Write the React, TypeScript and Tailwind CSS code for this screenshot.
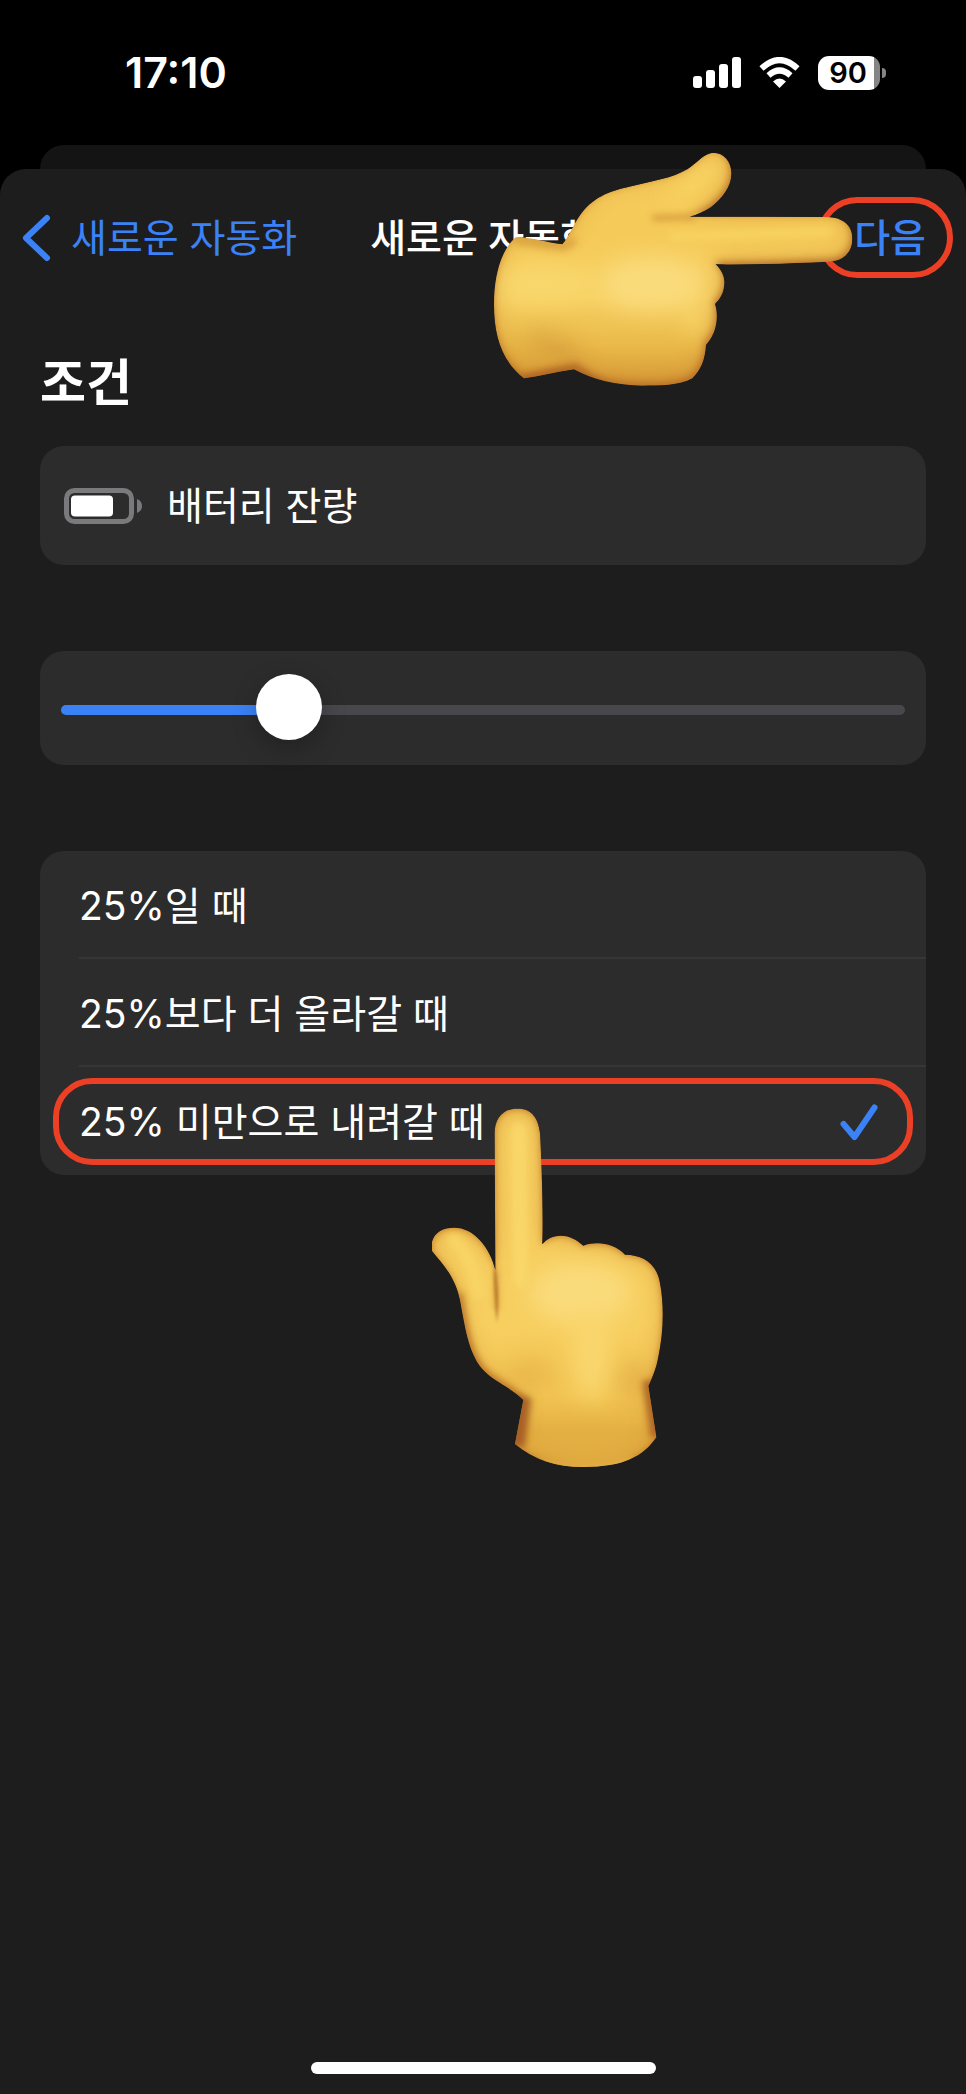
import { useState } from "react"

const options = [
  { value: "equal", label: "25%일 때" },
  { value: "above", label: "25%보다 더 올라갈 때" },
  { value: "below", label: "25% 미만으로 내려갈 때" },
]

const HAND_RIGHT =
  "M150 322C195 320 240 338 290 343C310 320 325 275 355 240C400 190 450 180 500 168C560 153 620 145 665 118C695 98 715 70 742 68C775 68 797 95 797 130C797 170 770 205 735 232C715 245 695 254 672 260L1085 261C1130 262 1160 285 1160 325C1160 370 1130 395 1085 395C980 400 860 404 750 403C768 420 777 440 776 460C775 490 762 508 748 522C756 545 755 580 745 605C737 625 728 635 721 645C718 690 705 720 680 745C640 767 580 767 530 767C450 765 385 750 325 718C275 725 225 738 175 745C110 695 85 620 85 525C85 440 105 360 150 322Z"

const HAND_UP =
  "M345 1092L370 960C330 920 280 905 245 865C205 815 195 740 180 660C165 590 130 555 96 513L96 485C105 455 130 443 163 443C220 443 270 500 286 570L284 160C284 115 310 86 350 86C395 84 415 115 420 160C425 250 430 400 427 492C440 478 455 467 483 467C510 467 530 480 550 497C590 483 640 488 675 524C730 525 770 550 780 610C793 680 790 760 775 830C768 870 755 895 745 918L769 1072C730 1130 670 1161 550 1161C470 1161 400 1140 345 1092Z"

// everything outside the hand, used to cast shade inwards from its edge
const OUTSIDE = "M-400-400H1900V1900H-400Z"

function HandRight({ className }: { className?: string }) {
  return (
    <svg viewBox="79 60 1086 711" className={className} aria-hidden="true">
      <defs>
        <clipPath id="hr-clip">
          <path d={HAND_RIGHT} />
        </clipPath>
        <linearGradient id="hr-base" gradientUnits="userSpaceOnUse" x1="0" y1="60" x2="0" y2="770">
          <stop offset="0" stopColor="#f6cc5c" />
          <stop offset="0.35" stopColor="#f5ca59" />
          <stop offset="0.62" stopColor="#f7d062" />
          <stop offset="0.82" stopColor="#eaba4a" />
          <stop offset="1" stopColor="#d79a38" />
        </linearGradient>
        <filter id="hr-s" filterUnits="userSpaceOnUse" x="-400" y="-400" width="2300" height="2300">
          <feGaussianBlur stdDeviation="11" />
        </filter>
        <filter id="hr-l" filterUnits="userSpaceOnUse" x="-400" y="-400" width="2300" height="2300">
          <feGaussianBlur stdDeviation="34" />
        </filter>
      </defs>
      <g clipPath="url(#hr-clip)">
        <path d={HAND_RIGHT} fill="url(#hr-base)" />
        <ellipse cx="560" cy="460" rx="160" ry="80" fill="#fadb7c" filter="url(#hr-l)" />
        <ellipse cx="230" cy="460" rx="170" ry="50" fill="#f9d86d" filter="url(#hr-l)" />
        <path d="M640 190L745 115" stroke="#fad968" strokeWidth="40" strokeLinecap="round" filter="url(#hr-l)" />
        <path d="M690 555L700 590" stroke="#fada70" strokeWidth="50" strokeLinecap="round" filter="url(#hr-l)" />
        <path d={OUTSIDE + HAND_RIGHT} fillRule="evenodd" fill="#a85f20" opacity="0.8" transform="translate(-3 -8)" filter="url(#hr-s)" />
        <path d={OUTSIDE + HAND_RIGHT} fillRule="evenodd" fill="#c27a26" opacity="0.4" transform="translate(-2 -14)" filter="url(#hr-l)" />
        <path d="M620 320L1090 304" stroke="#fad968" strokeWidth="26" strokeLinecap="round" opacity="0.6" filter="url(#hr-s)" />
        <path d="M560 264L690 261" stroke="#c17a28" strokeWidth="12" opacity="0.8" filter="url(#hr-s)" />
        <path d="M150 332L295 352L330 330" fill="none" stroke="#cf9136" strokeWidth="20" opacity="0.7" filter="url(#hr-s)" />
        <path d="M160 750L330 712L400 770" fill="none" stroke="#a85a20" strokeWidth="26" opacity="0.6" filter="url(#hr-s)" />
        <path d="M180 640Q260 620 330 690" fill="none" stroke="#c68631" strokeWidth="50" opacity="0.5" filter="url(#hr-l)" />
      </g>
    </svg>
  )
}

function HandUp({ className }: { className?: string }) {
  return (
    <svg viewBox="90 81 705 1086" className={className} aria-hidden="true">
      <defs>
        <clipPath id="hu-clip">
          <path d={HAND_UP} />
        </clipPath>
        <linearGradient id="hu-base" gradientUnits="userSpaceOnUse" x1="0" y1="80" x2="0" y2="1165">
          <stop offset="0" stopColor="#f7cf60" />
          <stop offset="0.6" stopColor="#f7cf60" />
          <stop offset="0.8" stopColor="#f2c553" />
          <stop offset="0.9" stopColor="#e3ae42" />
          <stop offset="1" stopColor="#e3b044" />
        </linearGradient>
        <filter id="hu-xs" filterUnits="userSpaceOnUse" x="-400" y="-400" width="2300" height="2300">
          <feGaussianBlur stdDeviation="4" />
        </filter>
        <filter id="hu-s" filterUnits="userSpaceOnUse" x="-400" y="-400" width="2300" height="2300">
          <feGaussianBlur stdDeviation="10" />
        </filter>
        <filter id="hu-l" filterUnits="userSpaceOnUse" x="-400" y="-400" width="2300" height="2300">
          <feGaussianBlur stdDeviation="34" />
        </filter>
      </defs>
      <g clipPath="url(#hu-clip)">
        <path d={HAND_UP} fill="url(#hu-base)" />
        <ellipse cx="540" cy="640" rx="150" ry="90" fill="#fadb7c" filter="url(#hu-l)" />
        <ellipse cx="575" cy="820" rx="55" ry="140" fill="#f9d76e" filter="url(#hu-l)" />
        <ellipse cx="390" cy="880" rx="70" ry="50" fill="#dda23c" opacity="0.4" filter="url(#hu-l)" />
        <ellipse cx="700" cy="900" rx="40" ry="60" fill="#d2933a" opacity="0.4" filter="url(#hu-l)" />
        <path d={OUTSIDE + HAND_UP} fillRule="evenodd" fill="#b4681f" opacity="0.75" transform="translate(0 2)" filter="url(#hu-s)" />
        <path d={OUTSIDE + HAND_UP} fillRule="evenodd" fill="#c27a26" opacity="0.4" filter="url(#hu-l)" />
        <path d="M356 150L362 600" stroke="#f9d86c" strokeWidth="44" strokeLinecap="round" opacity="0.85" filter="url(#hu-s)" />
        <path d="M160 480Q215 525 235 640" fill="none" stroke="#f8d566" strokeWidth="40" strokeLinecap="round" opacity="0.85" filter="url(#hu-s)" />
        <path d="M282 540Q300 620 291 730Q281 640 282 540Z" fill="#b06a24" filter="url(#hu-xs)" />
        <path d="M289 570L291 690" stroke="#c98a33" strokeWidth="14" opacity="0.6" filter="url(#hu-s)" />
        <path d="M180 640C195 740 205 815 245 865C280 905 330 920 370 960" fill="none" stroke="#ad6424" strokeWidth="20" opacity="0.6" filter="url(#hu-s)" />
        <path d="M372 950L352 1100" stroke="#9c5320" strokeWidth="46" opacity="0.8" filter="url(#hu-s)" />
        <path d="M742 900L768 1070" stroke="#a55c22" strokeWidth="34" opacity="0.75" filter="url(#hu-s)" />
        <path d="M410 1160Q550 1186 700 1150" fill="none" stroke="#e3b044" strokeWidth="44" filter="url(#hu-s)" />
      </g>
    </svg>
  )
}

function StatusBar() {
  return (
    <div className="flex h-[145px] items-center justify-between pr-20 pl-[125px]">
      <span className="pb-[2px] text-[43px] leading-[48px] font-semibold text-white">17:10</span>
      <div className="flex items-center gap-[18px]">
        <svg width="48" height="31" viewBox="0 0 48 31" fill="#fff" aria-hidden="true">
          <rect x="0" y="19" width="9" height="12" rx="3" />
          <rect x="13" y="13" width="9" height="18" rx="3" />
          <rect x="26" y="7" width="9" height="24" rx="3" />
          <rect x="39" y="0" width="9" height="31" rx="3" />
        </svg>
        <svg width="41" height="31" viewBox="0 0 41 31" fill="none" stroke="#fff" strokeWidth="6" aria-hidden="true">
          <path d="M2.5 11.5Q20.5-5.5 38.5 11.5" />
          <path d="M9.5 18.5Q20.5 8.5 31.5 18.5" />
          <path d="M20.5 31L14 24.5Q20.5 18.5 27 24.5Z" fill="#fff" stroke="none" />
        </svg>
        <div className="flex items-center gap-[2px]">
          <div className="flex h-[34px] w-[62px] items-center justify-center rounded-[11px] bg-linear-to-r from-white from-90% to-[#858585] to-90% pr-[2px] text-[29px] leading-[34px] font-semibold text-black">
            90
          </div>
          <div className="h-[10px] w-1 rounded-r-full bg-[#858585]" />
        </div>
      </div>
    </div>
  )
}

function BatteryIcon() {
  return (
    <svg width="79" height="36" viewBox="0 0 79 36" aria-hidden="true">
      <rect x="2.5" y="2.5" width="65" height="31" rx="8" fill="none" stroke="#7a7a7c" strokeWidth="5" />
      <rect x="7" y="7.5" width="42" height="21" rx="4" fill="#fff" />
      <path d="M73 11Q78 13 78 18T73 25Z" fill="#7a7a7c" />
    </svg>
  )
}

export default function App() {
  const [level, setLevel] = useState(25)
  const [selected, setSelected] = useState("below")

  return (
    <div
      lang="ko"
      className="flex min-h-screen flex-col bg-black font-[Inter,'Noto_Sans_CJK_KR',sans-serif] text-[39px] leading-[48px] text-white"
    >
      <StatusBar />
      <div className="mx-10 h-6 rounded-t-[24px] bg-[#141414]" />

      <main className="flex flex-1 flex-col rounded-t-[26px] bg-[#1d1d1d]">
        <header className="relative grid h-[138px] grid-cols-[1fr_auto_1fr] items-center px-[22px]">
          <button type="button" className="flex items-center gap-5 justify-self-start text-[#3b82f7]">
            <svg width="29" height="48" viewBox="0 0 29 48" fill="none" stroke="currentColor" strokeWidth="6" strokeLinecap="round" strokeLinejoin="round" aria-hidden="true">
              <path d="M25 4L4 24L25 44" />
            </svg>
            새로운 자동화
          </button>
          <h1 className="font-medium">새로운 자동화</h1>
          <button type="button" className="relative mr-[18px] justify-self-end font-medium text-[#3b82f7]">
            다음
            <span className="absolute -top-[17px] -right-[27px] h-[81px] w-[136px] rounded-full border-6 border-[#eb4025]" />
          </button>
          <HandRight className="pointer-events-none absolute -top-[19px] right-[112px] h-[237px] w-[362px]" />
        </header>

        <div className="flex flex-1 flex-col px-10 pt-[46px]">
          <h2 className="text-[50px] leading-[60px] font-bold">조건</h2>

          <section className="mt-[33px] flex h-[119px] items-center gap-6 rounded-[24px] bg-[#2c2c2c] px-6">
            <BatteryIcon />
            <span>배터리 잔량</span>
          </section>

          <section className="mt-[86px] flex h-[114px] items-center rounded-[24px] bg-[#2c2c2c] px-[21px] pt-1">
            <input
              type="range"
              min={0}
              max={100}
              value={level}
              onChange={(e) => setLevel(Number(e.target.value))}
              aria-label="배터리 잔량"
              className="h-[66px] w-full appearance-none bg-transparent [&::-webkit-slider-runnable-track]:h-[10px] [&::-webkit-slider-runnable-track]:rounded-full [&::-webkit-slider-runnable-track]:bg-[linear-gradient(to_right,#3b82f7_var(--level),#48474b_var(--level))] [&::-webkit-slider-thumb]:-mt-[31px] [&::-webkit-slider-thumb]:size-[66px] [&::-webkit-slider-thumb]:appearance-none [&::-webkit-slider-thumb]:rounded-full [&::-webkit-slider-thumb]:bg-white [&::-webkit-slider-thumb]:shadow-[0_8px_24px_rgba(0,0,0,0.25)]"
              style={{ "--level": `${level}%` } as React.CSSProperties}
            />
          </section>

          <fieldset className="relative mt-[86px] rounded-[24px] bg-[#2c2c2c]">
            {options.map((option, i) => (
              <label key={option.value} className="relative flex h-[108px] cursor-pointer pl-[39px]">
                <input
                  type="radio"
                  name="condition"
                  value={option.value}
                  checked={selected === option.value}
                  onChange={() => setSelected(option.value)}
                  className="sr-only"
                />
                <span
                  className={`flex flex-1 items-center justify-between pr-12 ${
                    i < options.length - 1 ? "border-b-2 border-[#363636] pt-1" : "pt-[2px]"
                  }`}
                >
                  {option.label}
                  {selected === option.value && (
                    <svg width="38" height="37" viewBox="0 0 38 37" fill="none" stroke="#3b82f7" strokeWidth="6" strokeLinecap="round" strokeLinejoin="round" aria-hidden="true">
                      <path d="M3.5 20L14.5 33L34.5 3.5" />
                    </svg>
                  )}
                </span>
              </label>
            ))}
            <span className="pointer-events-none absolute right-[13px] bottom-[10px] left-[13px] h-[87px] rounded-[39px] border-6 border-[#eb4025]" />
            <HandUp className="pointer-events-none absolute top-[256px] left-[390px] h-[362px] w-[235px]" />
          </fieldset>
        </div>

        <div className="mx-auto mb-5 h-3 w-[345px] rounded-full bg-white" />
      </main>
    </div>
  )
}
